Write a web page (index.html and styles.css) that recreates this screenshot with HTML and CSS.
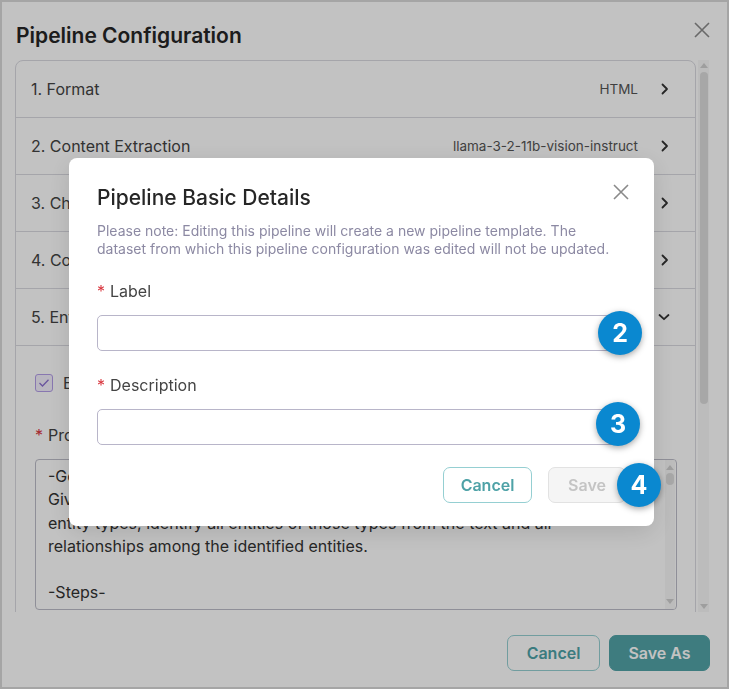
FILE: index.html
```html
<!DOCTYPE html>
<html lang="en">
<head>
    <meta charset="UTF-8">
    <meta name="viewport" content="width=device-width, initial-scale=1.0">
    <title>Pipeline Configuration</title>
    <link rel="stylesheet" href="styles.css">
</head>
<body>

<div class="window">
    <div class="window-head">
        <h2>Pipeline Configuration</h2>
        <button class="close-btn head-close" aria-label="Close">
            <svg width="18" height="18" viewBox="0 0 18 18"><path d="M2 2L16 16M16 2L2 16" /></svg>
        </button>
    </div>

    <div class="steps-scroll">
        <div class="steps">
            <div class="step">
                <span class="step-name">1. Format</span>
                <span class="step-value">HTML</span>
                <svg class="chev" width="10" height="12" viewBox="0 0 10 12"><path d="M2.5 1.5L7 6L2.5 10.5" /></svg>
            </div>
            <div class="step">
                <span class="step-name">2. Content Extraction</span>
                <span class="step-value">llama-3-2-11b-vision-instruct</span>
                <svg class="chev" width="10" height="12" viewBox="0 0 10 12"><path d="M2.5 1.5L7 6L2.5 10.5" /></svg>
            </div>
            <div class="step">
                <span class="step-name">3. Chunking</span>
                <span class="step-value">Recursive</span>
                <svg class="chev" width="10" height="12" viewBox="0 0 10 12"><path d="M2.5 1.5L7 6L2.5 10.5" /></svg>
            </div>
            <div class="step">
                <span class="step-name">4. Contextual Embedding</span>
                <span class="step-value">Enabled</span>
                <svg class="chev" width="10" height="12" viewBox="0 0 10 12"><path d="M2.5 1.5L7 6L2.5 10.5" /></svg>
            </div>
            <div class="step">
                <span class="step-name">5. Entity Extraction</span>
                <span class="step-value"></span>
                <svg class="chev" width="12" height="10" viewBox="0 0 12 10"><path d="M1.5 3L6 7.2L10.5 3" /></svg>
            </div>

            <div class="step-panel">
                <label class="check-row">
                    <span class="checkbox">
                        <svg width="12" height="10" viewBox="0 0 12 10"><path d="M1.5 5L4.5 8L10.5 1.8" /></svg>
                    </span>
                    Enable entity extraction
                </label>

                <div class="field-label"><span class="req">*</span>Prompt</div>
                <div class="prompt-box">
                    <div class="prompt-text">-Goal-
Given a text document that is potentially relevant to this activity and a
entity types, identify all entities of those types from the text and all
relationships among the identified entities.

-Steps-</div>
                    <div class="vscroll small">
                        <span class="arrow up"></span>
                        <span class="thumb"></span>
                        <span class="arrow down"></span>
                    </div>
                </div>
            </div>
        </div>

        <div class="vscroll">
            <span class="arrow up"></span>
            <span class="thumb"></span>
            <span class="arrow down"></span>
        </div>
    </div>

    <div class="window-foot">
        <button class="btn btn-outline">Cancel</button>
        <button class="btn btn-primary">Save As</button>
    </div>
</div>

<div class="backdrop">
    <div class="modal">
        <button class="close-btn modal-close" aria-label="Close">
            <svg width="18" height="18" viewBox="0 0 18 18"><path d="M2 2L16 16M16 2L2 16" /></svg>
        </button>
        <h3>Pipeline Basic Details</h3>
        <p class="note">Please note: Editing this pipeline will create a new pipeline template. The<br>dataset from which this pipeline configuration was edited will not be updated.</p>

        <div class="form-label"><span class="req">*</span>Label</div>
        <div class="input-wrap">
            <input type="text" class="text-input">
            <span class="badge badge-2">2</span>
        </div>

        <div class="form-label"><span class="req">*</span>Description</div>
        <div class="input-wrap">
            <input type="text" class="text-input">
            <span class="badge badge-3">3</span>
        </div>

        <div class="modal-foot">
            <button class="btn btn-outline small">Cancel</button>
            <button class="btn btn-disabled small">Save</button>
            <span class="badge badge-4">4</span>
        </div>
    </div>
</div>

</body>
</html>
```

FILE: styles.css
```css
body {
    margin: 0;
    padding: 0;
    font-family: Inter, "Noto Sans", sans-serif;
    color: #333;
    background: #fff;
}
button {
    font-family: inherit;
}
.window {
    box-sizing: border-box;
    width: 729px;
    height: 689px;
    border: 2px solid #d9d9d9;
    display: flex;
    flex-direction: column;
    background: #fff;
}
.window-head {
    box-sizing: border-box;
    display: flex;
    align-items: center;
    justify-content: space-between;
    height: 58px;
    padding: 8px 16px 0 14px;
}
.window-head h2 {
    margin: 0;
    font-size: 21px;
    font-weight: 600;
    color: #262626;
}
.close-btn {
    background: none;
    border: none;
    padding: 0;
    width: 18px;
    height: 18px;
    cursor: pointer;
}
.close-btn svg path {
    stroke: #8a8a8a;
    stroke-width: 1.6;
    fill: none;
}
.head-close {
    margin-top: -11px;
}

/* accordion of pipeline steps */
.steps-scroll {
    display: flex;
    height: 552px;
    margin: 0 18px 0 13px;
    overflow: hidden;
}
.steps {
    flex: 1;
    align-self: flex-start;
    border: 1px solid #d9d9e0;
    border-radius: 8px;
}
.step {
    display: flex;
    align-items: center;
    height: 56px;
    padding: 0 25px 0 15px;
    border-bottom: 1px solid #d9d9e0;
}
.step-name {
    flex: 1;
    font-size: 16px;
    color: #434343;
}
.step-value {
    font-size: 13.5px;
    color: #555;
    margin-right: 22px;
}
.chev path {
    fill: none;
    stroke: #333;
    stroke-width: 1.8;
    stroke-linecap: round;
    stroke-linejoin: round;
}
.step-panel {
    padding: 27px 18px 40px 19px;
}
.check-row {
    display: flex;
    align-items: center;
    gap: 10px;
    font-size: 16px;
    color: #434343;
}
.checkbox {
    box-sizing: border-box;
    width: 18px;
    height: 18px;
    border: 1px solid #b39de8;
    border-radius: 3px;
    background: #f4effd;
    display: flex;
    align-items: center;
    justify-content: center;
}
.checkbox path {
    fill: none;
    stroke: #8a6fd0;
    stroke-width: 1.3;
}
.field-label {
    margin-top: 32px;
    font-size: 16px;
    line-height: 20px;
    color: #434343;
}
.req {
    color: #d9363e;
    margin-right: 5px;
}
.prompt-box {
    margin-top: 14px;
    height: 151px;
    box-sizing: border-box;
    border: 1px solid #bdbdc8;
    border-radius: 4px;
    display: flex;
    overflow: hidden;
}
.prompt-text {
    flex: 1;
    padding: 5px 12px;
    font-size: 16px;
    line-height: 23.3px;
    white-space: pre;
    color: #333;
}

/* classic scrollbars */
.vscroll {
    width: 11px;
    margin-left: 2px;
    background: #f7f7f7;
    display: flex;
    flex-direction: column;
    align-items: center;
    padding: 3px 0;
}
.vscroll .thumb {
    width: 8px;
    height: 332px;
    margin-top: 4px;
    border-radius: 4px;
    background: #dcdcdc;
}
.vscroll .arrow {
    width: 0;
    height: 0;
    border-left: 4px solid transparent;
    border-right: 4px solid transparent;
}
.vscroll .arrow.up {
    border-bottom: 5px solid #d0d0d0;
}
.vscroll .arrow.down {
    margin-top: auto;
    border-top: 5px solid #d0d0d0;
}
.vscroll.small {
    width: 10px;
    margin: 0 1px 0 0;
    padding: 5px 0;
}
.vscroll.small .thumb {
    height: 12px;
    margin-top: 3px;
}

.window-foot {
    display: flex;
    justify-content: flex-end;
    gap: 9px;
    padding: 23px 17px 0 0;
}
.btn {
    box-sizing: border-box;
    height: 36px;
    border-radius: 7px;
    font-size: 16px;
    font-weight: 600;
    padding: 0;
}
.btn-outline {
    width: 93px;
    background: #fff;
    border: 1px solid #95cfd2;
    color: #4ea2a7;
}
.btn-primary {
    width: 101px;
    background: #52a3a8;
    border: 1px solid #52a3a8;
    color: #fff;
}

/* modal over the page */
.backdrop {
    position: fixed;
    top: 0;
    left: 0;
    right: 0;
    bottom: 0;
    background: rgba(0, 0, 0, 0.24);
    display: flex;
    align-items: center;
    justify-content: center;
    padding: 0 6px 5px 0;
}
.modal {
    position: relative;
    box-sizing: border-box;
    width: 585px;
    background: #fff;
    border-radius: 8px;
    padding: 28px 28px 23px;
    box-shadow: 0 6px 24px rgba(0, 0, 0, 0.12);
}
.modal-close {
    position: absolute;
    top: 25px;
    right: 24px;
}
.modal h3 {
    margin: 0;
    font-size: 21px;
    line-height: 24px;
    font-weight: 500;
    color: #262626;
}
.note {
    margin: 12px 0 0;
    font-size: 14px;
    line-height: 18px;
    color: #8c89a3;
    white-space: nowrap;
}
.form-label {
    margin-top: 23px;
    font-size: 16px;
    line-height: 20px;
    color: #444;
}
.input-wrap + .form-label {
    margin-top: 24px;
}
.input-wrap {
    position: relative;
    margin-top: 14px;
}
.text-input {
    display: block;
    box-sizing: border-box;
    width: 100%;
    height: 36px;
    border: 1px solid #b8b5c9;
    border-radius: 5px;
    font-family: inherit;
    font-size: 15px;
    padding: 0 12px;
}
.modal-foot {
    position: relative;
    display: flex;
    justify-content: flex-end;
    gap: 16px;
    margin-top: 22px;
}
.btn.small {
    font-size: 16px;
    border-radius: 7px;
}
.btn-outline.small {
    width: 89px;
}
.btn-disabled {
    width: 78px;
    background: #f5f5f5;
    border: 1px solid #e2e2e2;
    color: #c4c4c4;
}

/* step badges */
.badge {
    position: absolute;
    width: 44px;
    height: 44px;
    border-radius: 50%;
    background: #0a88d0;
    color: #fff;
    font-size: 25px;
    font-weight: 700;
    display: flex;
    align-items: center;
    justify-content: center;
    box-shadow: 0 2px 6px rgba(0, 0, 0, 0.35);
}
.badge-2 {
    right: -16px;
    top: -4px;
}
.badge-3 {
    right: -14px;
    top: -7px;
}
.badge-4 {
    right: -35px;
    top: -4px;
}
```
